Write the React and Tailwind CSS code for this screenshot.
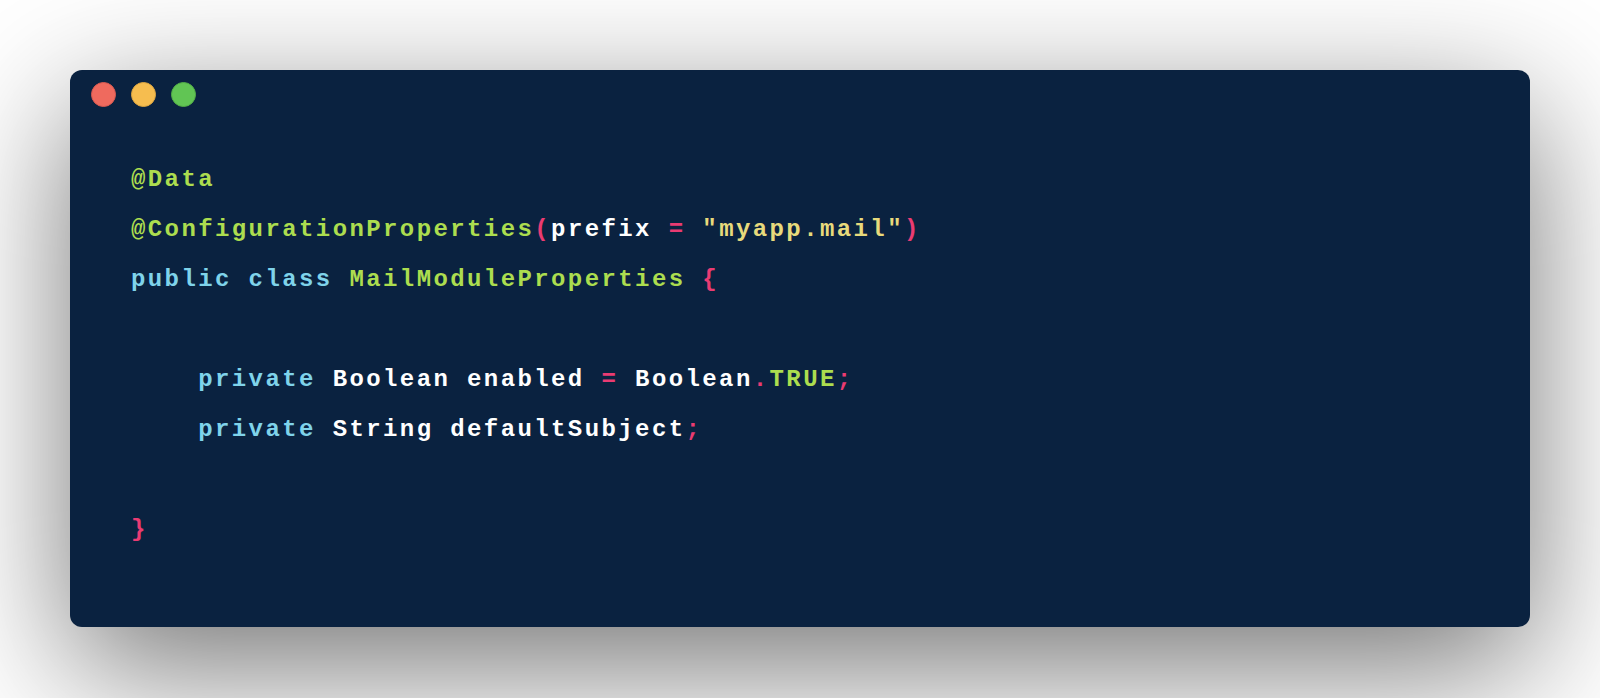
import React from "react";

const C = {
  ann: "text-[#acdd4f]",
  kw: "text-[#7fd3ea]",
  pink: "text-[#ea3b72]",
  str: "text-[#e8da7c]",
  w: "text-white",
};

function Line({ children }) {
  return <div className="h-[50px] leading-[50px] whitespace-pre">{children}</div>;
}

export default function App() {
  return (
    <div className="w-[1600px] h-[698px] bg-white overflow-hidden pt-[70px] pl-[70px]">
      <div className="w-[1460px] h-[557px] rounded-[12px] bg-[#0a2240] shadow-[0_40px_136px_rgba(0,0,0,0.55)]">
        <div className="flex gap-[15px] pt-[12px] pl-[21px]">
          <span className="w-[25px] h-[25px] rounded-full bg-[#ef6a5e] border border-[#d85a50]" />
          <span className="w-[25px] h-[25px] rounded-full bg-[#f6bd4f] border border-[#dea640]" />
          <span className="w-[25px] h-[25px] rounded-full bg-[#61c554] border border-[#52ad46]" />
        </div>
        <div
          className="mt-[48px] pl-[61px] text-[24px] font-bold tracking-[2.4px]"
          style={{ fontFamily: '"Liberation Mono", "DejaVu Sans Mono", monospace' }}
        >
          <Line>
            <span className={C.ann}>@Data</span>
          </Line>
          <Line>
            <span className={C.ann}>@ConfigurationProperties</span>
            <span className={C.pink}>(</span>
            <span className={C.w}>prefix </span>
            <span className={C.pink}>=</span>
            <span className={C.w}> </span>
            <span className={C.str}>"myapp.mail"</span>
            <span className={C.pink}>)</span>
          </Line>
          <Line>
            <span className={C.kw}>public class </span>
            <span className={C.ann}>MailModuleProperties </span>
            <span className={C.pink}>{"{"}</span>
          </Line>
          <Line> </Line>
          <Line>
            <span className={C.kw}>    private </span>
            <span className={C.w}>Boolean enabled </span>
            <span className={C.pink}>=</span>
            <span className={C.w}> Boolean</span>
            <span className={C.pink}>.</span>
            <span className={C.ann}>TRUE</span>
            <span className={C.pink}>;</span>
          </Line>
          <Line>
            <span className={C.kw}>    private </span>
            <span className={C.w}>String defaultSubject</span>
            <span className={C.pink}>;</span>
          </Line>
          <Line> </Line>
          <Line>
            <span className={C.pink}>{"}"}</span>
          </Line>
        </div>
      </div>
    </div>
  );
}
